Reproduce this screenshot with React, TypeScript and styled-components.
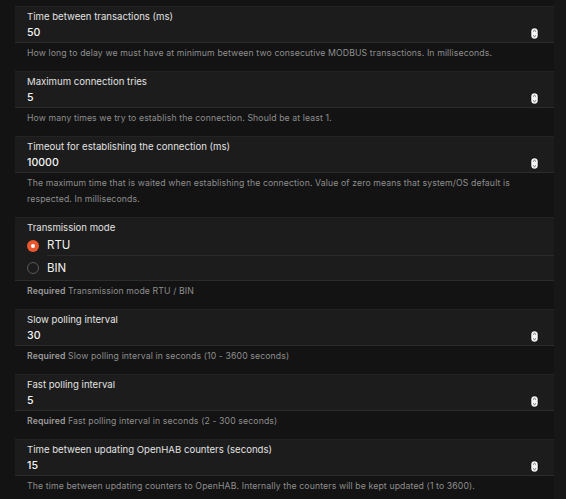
import styled, { createGlobalStyle } from "styled-components";
import { useState } from "react";

const GlobalStyle = createGlobalStyle`
  html, body {
    margin: 0;
    padding: 0;
    background: #131313;
  }
  body {
    font-family: Inter, "Noto Sans", "Liberation Sans", sans-serif;
    -webkit-font-smoothing: antialiased;
  }
`;

const Page = styled.div`
  display: flex;
  width: 566px;
  height: 499px;
  overflow: hidden;
  background: #131313;
`;

const Content = styled.div`
  flex: 1;
  padding: 6px 0 0 15px;
`;

const ScrollTrack = styled.div`
  width: 12px;
  flex-shrink: 0;
  background: #171717;
`;

const Field = styled.div`
  display: flex;
  flex-direction: column;
`;

const Panel = styled.div`
  box-sizing: border-box;
  background: #1c1c1c;
  border-top: 1px solid #232323;
  border-bottom: 1px solid #2c2c2c;
`;

const InputPanel = styled(Panel)`
  height: 37px;
  padding: 3px 15px 0 12px;
`;

const Label = styled.div`
  font-size: 9.6px;
  line-height: 14px;
  color: #e2e2e2;
  font-weight: 400;
`;

const ValueRow = styled.div`
  display: flex;
  align-items: center;
  justify-content: space-between;
  height: 18px;
`;

const Value = styled.input`
  flex: 1;
  min-width: 0;
  height: 18px;
  background: transparent;
  border: none;
  outline: none;
  padding: 0;
  margin: 0;
  color: #f5f5f5;
  font-family: inherit;
  font-size: 10.6px;
  font-weight: 500;
  line-height: 18px;
`;

const Help = styled.div`
  box-sizing: border-box;
  padding: 2px 12px 10px 12px;
  font-size: 8.7px;
  line-height: 16px;
  letter-spacing: 0.12px;
  color: #8e8e8e;
  b {
    font-weight: 600;
    color: #9a9a9a;
  }
`;

const RadioPanel = styled(Panel)`
  height: 64px;
  padding-top: 3px;
`;

const RadioLabel = styled(Label)`
  padding-left: 12px;
`;

const RadioRow = styled.label<{ $h: number }>`
  display: flex;
  align-items: center;
  height: ${(p) => p.$h}px;
  padding-left: 12px;
  cursor: pointer;
`;

const RadioCircle = styled.span<{ $on: boolean }>`
  width: 12px;
  height: 12px;
  box-sizing: border-box;
  border-radius: 50%;
  flex-shrink: 0;
  display: flex;
  align-items: center;
  justify-content: center;
  background: ${(p) => (p.$on ? "#e8572e" : "transparent")};
  border: ${(p) => (p.$on ? "none" : "1px solid #5a5a5a")};
  &::after {
    content: "";
    display: ${(p) => (p.$on ? "block" : "none")};
    width: 4px;
    height: 4px;
    border-radius: 50%;
    background: #fff;
  }
`;

const RadioText = styled.span<{ $divider: boolean }>`
  flex: 1;
  align-self: stretch;
  display: flex;
  align-items: center;
  margin-left: 8px;
  font-size: 11.5px;
  color: #f0f0f0;
  border-bottom: ${(p) => (p.$divider ? "1px solid #2a2a2a" : "none")};
`;

const Spinner = () => (
  <svg width="9" height="13" viewBox="0 0 9 13">
    <rect x="0.75" y="0.75" width="7.5" height="11.5" rx="3.2" fill="#f4f4f4" stroke="#000" strokeWidth="1" />
    <path d="M3 4.6 L4.5 3.2 L6 4.6" fill="none" stroke="#555" strokeWidth="0.9" />
    <path d="M3 8.4 L4.5 9.8 L6 8.4" fill="none" stroke="#555" strokeWidth="0.9" />
  </svg>
);

type NumberFieldProps = {
  label: string;
  value: string;
  help: React.ReactNode;
};

const NumberField = ({ label, value, help }: NumberFieldProps) => (
  <Field>
    <InputPanel>
      <Label>{label}</Label>
      <ValueRow>
        <Value defaultValue={value} />
        <Spinner />
      </ValueRow>
    </InputPanel>
    <Help>{help}</Help>
  </Field>
);

const ModeField = () => {
  const [mode, setMode] = useState("RTU");
  return (
    <Field>
      <RadioPanel>
        <RadioLabel>Transmission mode</RadioLabel>
        <RadioRow $h={21} onClick={() => setMode("RTU")}>
          <RadioCircle $on={mode === "RTU"} />
          <RadioText $divider>RTU</RadioText>
        </RadioRow>
        <RadioRow $h={24} onClick={() => setMode("BIN")}>
          <RadioCircle $on={mode === "BIN"} />
          <RadioText $divider={false}>BIN</RadioText>
        </RadioRow>
      </RadioPanel>
      <Help>
        <b>Required</b> Transmission mode RTU / BIN
      </Help>
    </Field>
  );
};

export default function App() {
  return (
    <>
      <GlobalStyle />
      <Page>
        <Content>
          <NumberField
            label="Time between transactions (ms)"
            value="50"
            help="How long to delay we must have at minimum between two consecutive MODBUS transactions. In milliseconds."
          />
          <NumberField
            label="Maximum connection tries"
            value="5"
            help="How many times we try to establish the connection. Should be at least 1."
          />
          <NumberField
            label="Timeout for establishing the connection (ms)"
            value="10000"
            help="The maximum time that is waited when establishing the connection. Value of zero means that system/OS default is respected. In milliseconds."
          />
          <ModeField />
          <NumberField
            label="Slow polling interval"
            value="30"
            help={
              <>
                <b>Required</b> Slow polling interval in seconds (10 - 3600 seconds)
              </>
            }
          />
          <NumberField
            label="Fast polling interval"
            value="5"
            help={
              <>
                <b>Required</b> Fast polling interval in seconds (2 - 300 seconds)
              </>
            }
          />
          <NumberField
            label="Time between updating OpenHAB counters (seconds)"
            value="15"
            help="The time between updating counters to OpenHAB. Internally the counters will be kept updated (1 to 3600)."
          />
        </Content>
        <ScrollTrack />
      </Page>
    </>
  );
}
